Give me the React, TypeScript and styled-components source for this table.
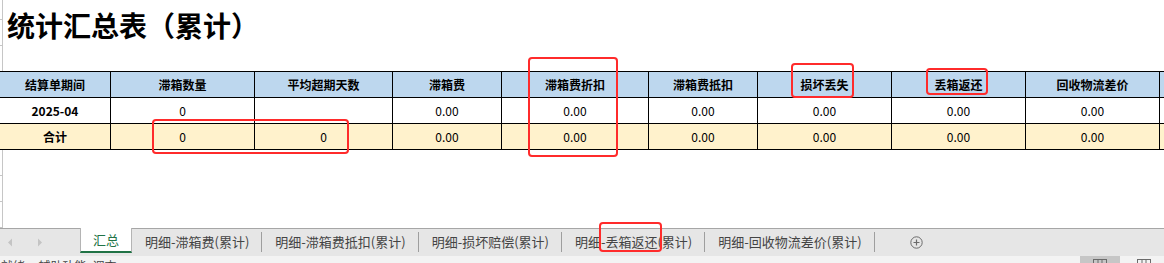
import { Fragment } from "react";
import styled, { createGlobalStyle } from "styled-components";

const GlobalStyle = createGlobalStyle`
  html, body {
    margin: 0;
    padding: 0;
    background: #ffffff;
  }
  body {
    font-family: "Noto Sans CJK SC", "Noto Sans", sans-serif;
    overflow: hidden;
  }
`;

const Page = styled.div`
  position: relative;
  width: 1164px;
  height: 263px;
  overflow: hidden;
  display: flex;
  flex-direction: column;
`;

const Sheet = styled.div`
  height: 228px;
  flex-shrink: 0;
  display: flex;
`;

const Gutter = styled.div`
  width: 2px;
  flex-shrink: 0;
  border-right: 1px solid #c6c6c6;
  background: linear-gradient(to bottom, #c6c6c6 1px, transparent 1px) 0 71px / 2px 26px repeat-y;
`;

const Content = styled.div`
  flex: 1;
  min-width: 0;
`;

const Title = styled.h1`
  margin: 0;
  height: 71px;
  box-sizing: border-box;
  padding: 6px 0 0 4px;
  font-size: 28px;
  line-height: 38px;
  font-weight: 700;
  color: #000;
`;

const Grid = styled.table`
  margin-left: -4px;
  border-collapse: collapse;
  table-layout: fixed;
  width: 1301px;
`;

type Tone = "head" | "body" | "total";

const toneBg: Record<Tone, string> = {
  head: "#bdd7ee",
  body: "#ffffff",
  total: "#fff2cc",
};

const Cell = styled.td<{ $tone: Tone; $bold?: boolean }>`
  height: 25px;
  padding: 0;
  border: 1px solid #000;
  background: ${(p) => toneBg[p.$tone]};
  text-align: center;
  vertical-align: middle;
  font-size: 12px;
  line-height: 14px;
  font-weight: ${(p) => (p.$bold ? 700 : 400)};
  color: #000;
  white-space: nowrap;
  overflow: hidden;
`;

const TabBar = styled.div`
  height: 28px;
  flex-shrink: 0;
  box-sizing: border-box;
  border-top: 1px solid #a6a6a6;
  background: #e6e6e6;
  display: flex;
  align-items: flex-start;
  font-size: 13px;
`;

const NavArrows = styled.div`
  width: 80px;
  height: 27px;
  display: flex;
  align-items: center;
  gap: 24px;
  padding-left: 7px;
  box-sizing: border-box;
`;

const SheetTab = styled.div<{ $active?: boolean }>`
  box-sizing: border-box;
  display: flex;
  align-items: center;
  padding: ${(p) => (p.$active ? "0 12px" : "0 12px 0 13px")};
  white-space: nowrap;
  color: ${(p) => (p.$active ? "#217346" : "#444")};
  background: ${(p) => (p.$active ? "#ffffff" : "transparent")};
  border-left: ${(p) => (p.$active ? "1px solid #b4b4b4" : "none")};
  border-right: ${(p) => (p.$active ? "1px solid #b4b4b4" : "none")};
  border-bottom: ${(p) => (p.$active ? "2px solid #217346" : "none")};
  margin-top: ${(p) => (p.$active ? "-1px" : "0")};
  height: ${(p) => (p.$active ? "25px" : "24px")};
`;

const Sep = styled.span`
  width: 1px;
  height: 20px;
  margin-top: 3px;
  background: #9e9e9e;
  flex-shrink: 0;
`;

const AddButton = styled.div`
  margin-left: 35px;
  height: 27px;
  display: flex;
  align-items: center;
`;

const StatusBar = styled.div`
  flex: 1;
  background: #f3f3f3;
  display: flex;
  align-items: flex-start;
  font-size: 12px;
  color: #444;
`;

const StatusText = styled.div`
  padding: 3px 0 0 1px;
  line-height: 14px;
  white-space: nowrap;
  flex: 1;
`;

const ViewButton = styled.div<{ $on?: boolean }>`
  width: 40px;
  height: 7px;
  margin-right: ${(p) => (p.$on ? "4px" : "0")};
  background: ${(p) => (p.$on ? "#c6c6c6" : "transparent")};
  display: flex;
  justify-content: center;
  padding-top: 3px;
  box-sizing: border-box;
`;

const Marker = styled.div<{ $x: number; $y: number; $w: number; $h: number }>`
  position: absolute;
  left: ${(p) => p.$x}px;
  top: ${(p) => p.$y}px;
  width: ${(p) => p.$w}px;
  height: ${(p) => p.$h}px;
  box-sizing: border-box;
  border: 2px solid #ff2b2b;
  border-radius: 4px;
  pointer-events: none;
`;

const headers = [
  "结算单期间",
  "滞箱数量",
  "平均超期天数",
  "滞箱费",
  "滞箱费折扣",
  "滞箱费抵扣",
  "损坏丢失",
  "丢箱返还",
  "回收物流差价",
  "",
];

const widths = [111, 144, 138, 109, 147, 109, 134, 134, 134, 141];

const rows: { tone: Tone; cells: string[] }[] = [
  {
    tone: "body",
    cells: ["2025-04", "0", "", "0.00", "0.00", "0.00", "0.00", "0.00", "0.00", ""],
  },
  {
    tone: "total",
    cells: ["合计", "0", "0", "0.00", "0.00", "0.00", "0.00", "0.00", "0.00", ""],
  },
];

const tabs = [
  "明细-滞箱费(累计)",
  "明细-滞箱费抵扣(累计)",
  "明细-损坏赔偿(累计)",
  "明细-丢箱返还(累计)",
  "明细-回收物流差价(累计)",
];

function Arrow({ dir }: { dir: "left" | "right" }) {
  return (
    <svg width="6" height="9" viewBox="0 0 6 9">
      <path d={dir === "left" ? "M5 0.5 L1 4.5 L5 8.5 Z" : "M1 0.5 L5 4.5 L1 8.5 Z"} fill="#c4c4c4" />
    </svg>
  );
}

function PlusCircle() {
  return (
    <svg width="13" height="13" viewBox="0 0 13 13">
      <circle cx="6.5" cy="6.5" r="5.7" fill="none" stroke="#6b6b6b" strokeWidth="1" />
      <path d="M6.5 3.5 V9.5 M3.5 6.5 H9.5" stroke="#6b6b6b" strokeWidth="1.2" />
    </svg>
  );
}

function GridIcon() {
  return (
    <svg width="14" height="10" viewBox="0 0 14 10">
      <rect x="0.5" y="0.5" width="13" height="9" fill="none" stroke="#6b6b6b" />
      <path d="M5 0.5 V9.5 M9 0.5 V9.5" stroke="#6b6b6b" />
    </svg>
  );
}

export default function App() {
  return (
    <>
      <GlobalStyle />
      <Page>
        <Sheet>
          <Gutter />
          <Content>
            <Title>统计汇总表（累计）</Title>
            <Grid>
              <colgroup>
                {widths.map((w, i) => (
                  <col key={i} style={{ width: w }} />
                ))}
              </colgroup>
              <tbody>
                <tr>
                  {headers.map((h, i) => (
                    <Cell key={i} $tone="head" $bold>
                      {h}
                    </Cell>
                  ))}
                </tr>
                {rows.map((r, ri) => (
                  <tr key={ri}>
                    {r.cells.map((c, i) => (
                      <Cell key={i} $tone={r.tone} $bold={i === 0}>
                        {c}
                      </Cell>
                    ))}
                  </tr>
                ))}
              </tbody>
            </Grid>
          </Content>
        </Sheet>

        <TabBar>
          <NavArrows>
            <Arrow dir="left" />
            <Arrow dir="right" />
          </NavArrows>
          <SheetTab $active>汇总</SheetTab>
          {tabs.map((t) => (
            <Fragment key={t}>
              <SheetTab>{t}</SheetTab>
              <Sep />
            </Fragment>
          ))}
          <AddButton>
            <PlusCircle />
          </AddButton>
        </TabBar>

        <StatusBar>
          <StatusText>就绪 &nbsp; &nbsp; 辅助功能: 调查</StatusText>
          <ViewButton $on>
            <GridIcon />
          </ViewButton>
          <ViewButton>
            <GridIcon />
          </ViewButton>
        </StatusBar>

        <Marker $x={152} $y={119} $w={197} $h={35} />
        <Marker $x={528} $y={57} $w={90} $h={100} />
        <Marker $x={791} $y={63} $w={63} $h={35} />
        <Marker $x={926} $y={68} $w={62} $h={27} />
        <Marker $x={599} $y={222} $w={63} $h={30} />
      </Page>
    </>
  );
}
